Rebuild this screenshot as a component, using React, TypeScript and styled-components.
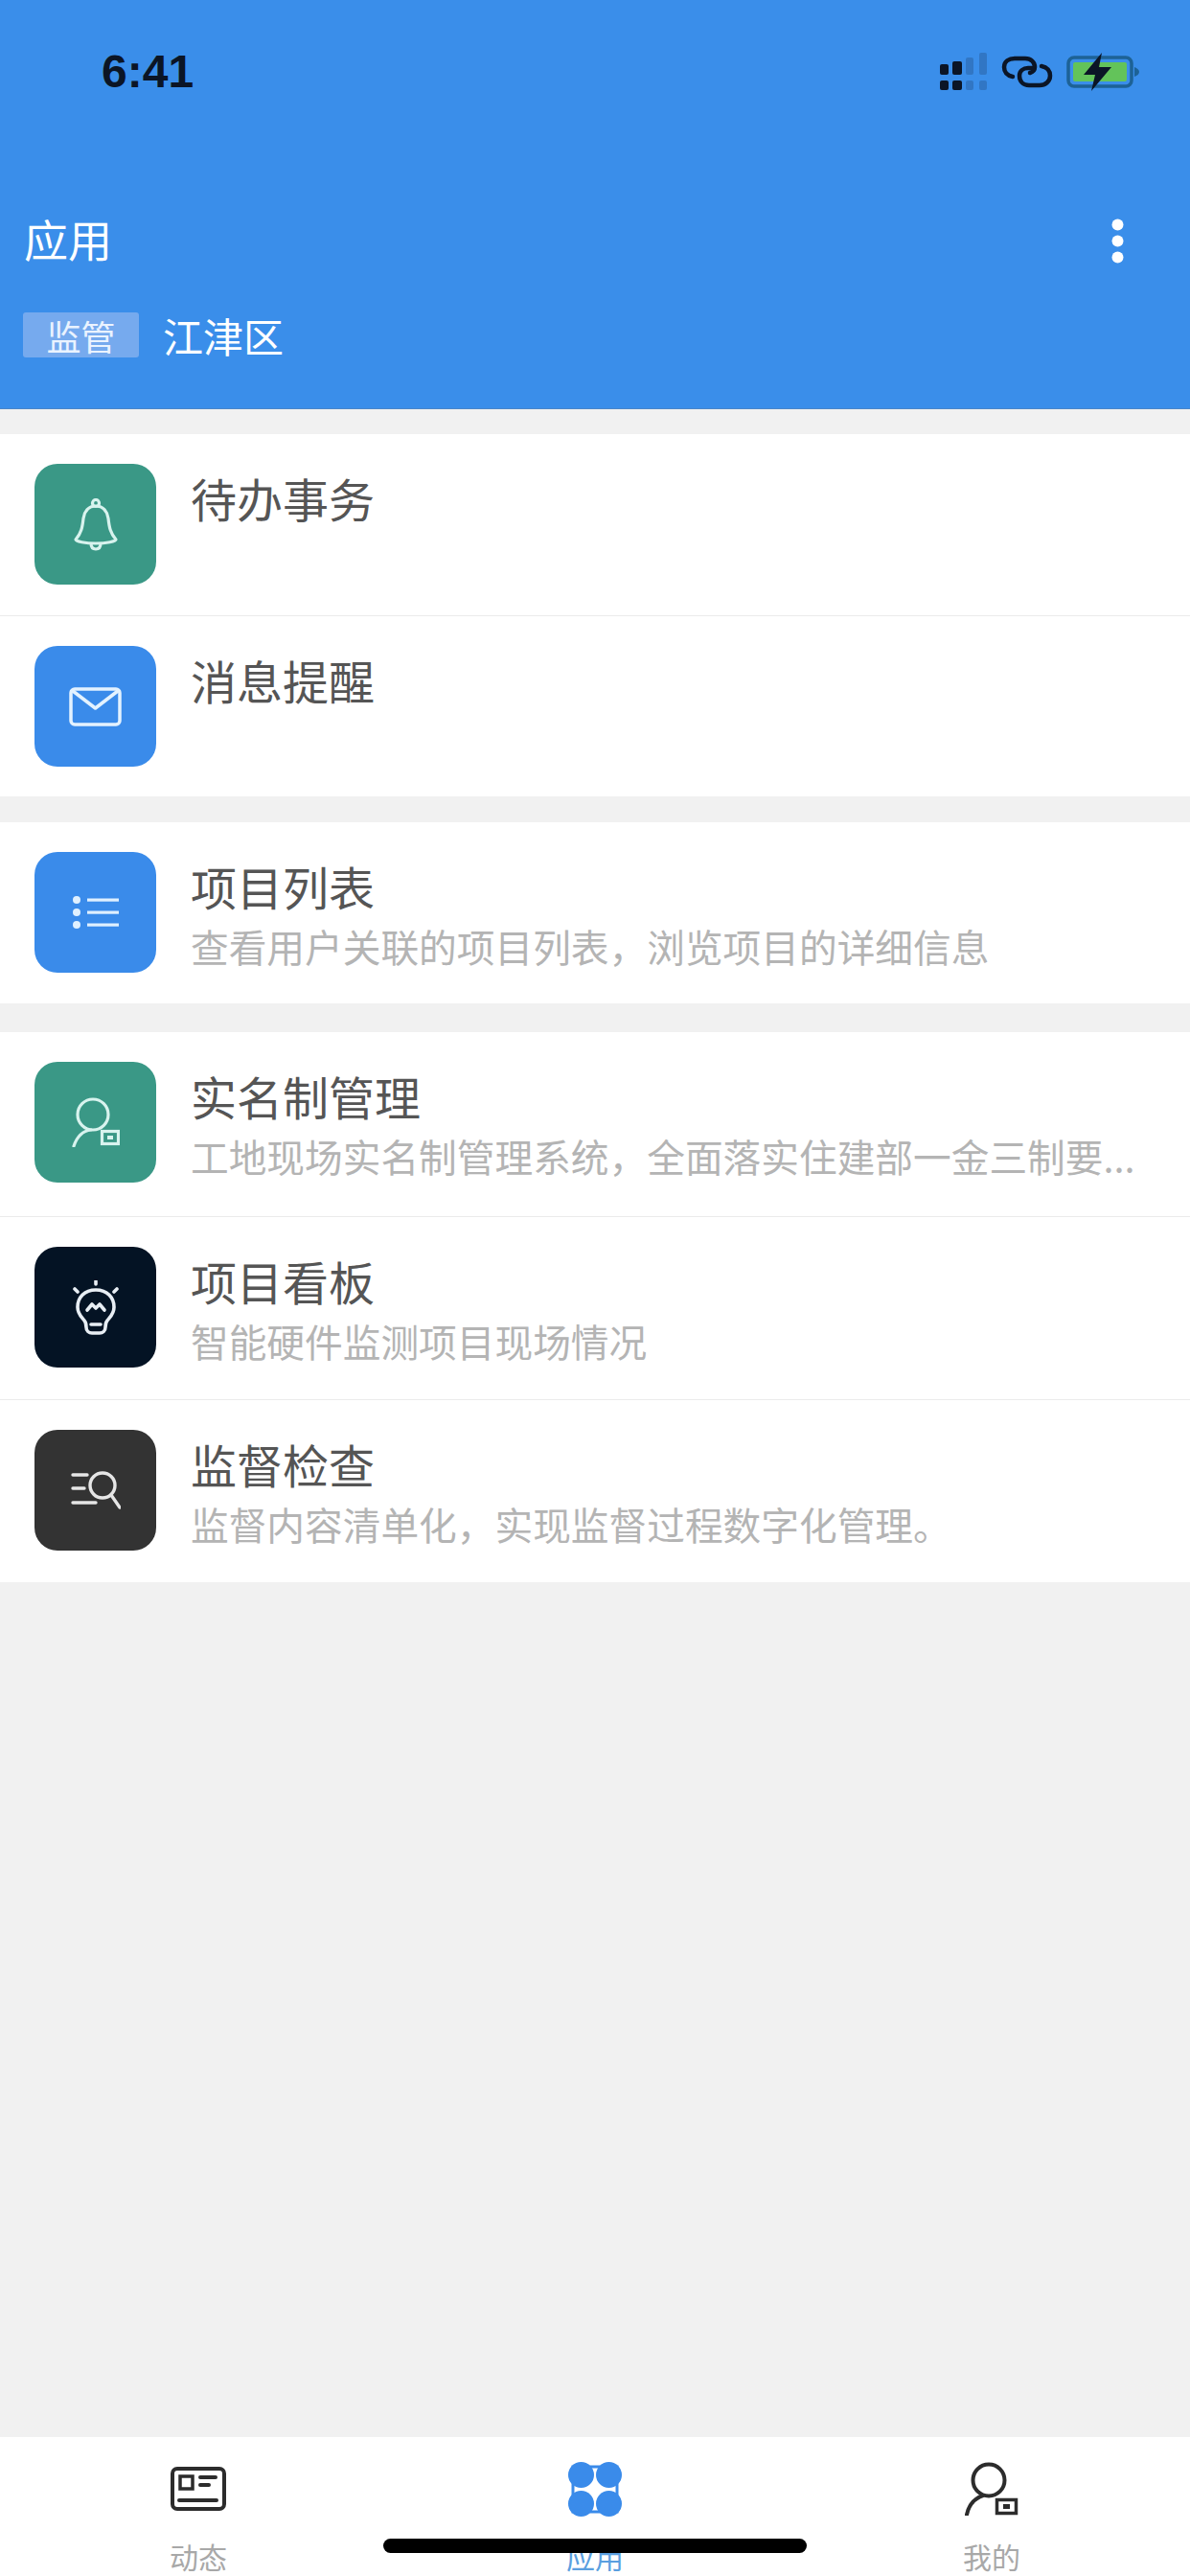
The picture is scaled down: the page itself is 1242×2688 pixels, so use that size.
import styled, { createGlobalStyle } from "styled-components";

const GlobalStyle = createGlobalStyle`
  html, body {
    margin: 0;
    padding: 0;
    background: #f1f1f1;
  }
  * {
    box-sizing: border-box;
  }
`;

const CJK = `"Noto Sans CJK SC", "Noto Sans", sans-serif`;

const Page = styled.div`
  position: relative;
  width: 1242px;
  height: 2688px;
  display: flex;
  flex-direction: column;
  overflow: hidden;
  background: #f1f1f1;
  font-family: ${CJK};
`;

const Header = styled.header`
  height: 427px;
  flex-shrink: 0;
  padding-top: 50px;
  background: #3a8eea;
  color: #fff;
  border-bottom: 1px solid #4a86c8;
`;

const StatusBar = styled.div`
  height: 50px;
  display: flex;
  align-items: center;
  justify-content: space-between;
  padding: 0 52px 0 106px;
`;

const Time = styled.span`
  font-family: "Liberation Sans", Arial, sans-serif;
  font-size: 48px;
  font-weight: 700;
  color: #0b1526;
  line-height: 49px;
  height: 50px;
`;

const StatusIcons = styled.div`
  display: flex;
  align-items: center;
  gap: 14px;
`;

const TitleRow = styled.div`
  height: 50px;
  margin-top: 126px;
  padding: 0 69px 0 25px;
  display: flex;
  align-items: center;
  justify-content: space-between;
`;

const PageTitle = styled.h1`
  margin: -6px 0 0;
  font-size: 46px;
  font-weight: 400;
  line-height: 50px;
`;

const ScopeRow = styled.div`
  height: 47px;
  margin-top: 50px;
  padding-left: 24px;
  display: flex;
  align-items: flex-start;
  gap: 25px;
`;

const ScopeTag = styled.span`
  width: 121px;
  height: 47px;
  display: flex;
  align-items: center;
  justify-content: center;
  background: #76aaee;
  border-radius: 3px;
  font-size: 36px;
  line-height: 44px;
  color: #eaf3ff;
`;

const ScopeName = styled.span`
  font-size: 42px;
  line-height: 47px;
`;

const Content = styled.main`
  flex: 1;
  padding-top: 26px;
  display: flex;
  flex-direction: column;
  gap: 27px;
`;

const Section = styled.section<{ $offset?: number }>`
  margin-top: ${(props) => props.$offset ?? 0}px;
  background: #fff;
`;

const Row = styled.div<{ $height?: number }>`
  height: ${(props) => props.$height ?? 189}px;
  padding: 31px 0 0 36px;
  display: flex;
  align-items: flex-start;
  gap: 36px;
  border-top: 1px solid #ebebeb;

  &:first-child {
    border-top: none;
  }
`;

const Tile = styled.div<{ $color: string }>`
  width: 127px;
  height: 126px;
  flex-shrink: 0;
  display: flex;
  align-items: center;
  justify-content: center;
  border-radius: 24px;
  background: ${(props) => props.$color};
`;

const RowText = styled.div`
  padding-top: 11px;
  min-width: 0;
`;

const RowTitle = styled.div`
  font-size: 48px;
  line-height: 48px;
  color: #555;
`;

const RowDesc = styled.div`
  margin-top: 19px;
  font-size: 39.7px;
  line-height: 40px;
  color: #b4b4b4;
  white-space: nowrap;
`;

const TabBar = styled.nav`
  height: 145px;
  flex-shrink: 0;
  display: grid;
  grid-template-columns: repeat(3, 1fr);
  background: #fff;
`;

const Tab = styled.div<{ $active?: boolean }>`
  padding-top: 24px;
  display: flex;
  flex-direction: column;
  align-items: center;
  font-size: 30px;
  line-height: 30px;
  color: ${(props) => (props.$active ? "#5a9fe0" : "#a8a8a8")};
`;

const TabIcon = styled.div`
  height: 60px;
  margin-bottom: 25px;
  display: flex;
  align-items: center;
  justify-content: center;
`;

const HomeBar = styled.div`
  position: absolute;
  left: 400px;
  bottom: 24px;
  width: 442px;
  height: 15px;
  border-radius: 8px;
  background: #000;
`;

function SignalIcon() {
  return (
    <svg width="50" height="40" viewBox="0 0 50 40">
      <g fill="#0b1526">
        <rect x="0" y="12" width="9" height="11" rx="2" />
        <rect x="13" y="9" width="10" height="14" rx="2" />
        <rect x="0" y="29" width="9" height="10" rx="2" />
        <rect x="13" y="29" width="10" height="10" rx="2" />
      </g>
      <g fill="#2f6fb8" opacity="0.75">
        <rect x="27" y="5" width="8" height="18" rx="2" />
        <rect x="41" y="0" width="8" height="23" rx="2" />
        <rect x="27" y="29" width="8" height="10" rx="2" />
        <rect x="41" y="29" width="8" height="10" rx="2" />
      </g>
    </svg>
  );
}

function LinkIcon() {
  return (
    <svg width="54" height="34" viewBox="0 0 54 34" fill="none" stroke="#0b1526" strokeWidth="4.5" strokeLinecap="round">
      <path d="M12 22C6 21 3 17 3 12 3 6 8 3 14 3H25c6 0 10 4 10 9 0 3-2 5-5 6" />
      <path d="M42 11c6 1 9 5 9 10 0 6-5 10-11 10H29c-6 0-10-4-10-10 0-5 4-8 9-8h4" />
    </svg>
  );
}

function BatteryIcon() {
  return (
    <svg width="77" height="40" viewBox="0 0 77 40">
      <rect x="2" y="5" width="66" height="30" rx="6" fill="none" stroke="#1d6296" strokeWidth="3.5" />
      <rect x="7" y="10" width="56" height="20" rx="2" fill="#63c35a" />
      <path d="M71 15c3 1 5 3 5 5s-2 4-5 5z" fill="#1d6296" />
      <path d="M37 0 18 23h12l-4 17 21-25H34z" fill="#0b1526" />
    </svg>
  );
}

function DotsIcon() {
  return (
    <svg width="13" height="47" viewBox="0 0 13 47" fill="#fff">
      <circle cx="6.5" cy="6.5" r="6" />
      <circle cx="6.5" cy="23.5" r="6" />
      <circle cx="6.5" cy="40.5" r="6" />
    </svg>
  );
}

function BellIcon() {
  return (
    <svg width="46" height="55" viewBox="0 0 46 55" fill="none" stroke="#d8f3ee" strokeWidth="3.2" strokeLinejoin="round">
      <circle cx="23" cy="5" r="3.5" />
      <path d="M23 8c-8 0-12 6-13 13-1 9-2 15-8 22 0 2 10 4 21 4s21-2 21-4c-6-7-7-13-8-22-1-7-5-13-13-13z" />
      <path d="M18 47c0 4 2 6 5 6s5-2 5-6" />
    </svg>
  );
}

function MailIcon() {
  return (
    <svg width="55" height="41" viewBox="0 0 55 41" fill="none" stroke="#e3f2ff" strokeWidth="3.5" strokeLinejoin="round" strokeLinecap="round">
      <rect x="2" y="2" width="51" height="37" rx="4" />
      <path d="M4 4 27.5 22 51 4" />
    </svg>
  );
}

function ListIcon() {
  return (
    <svg width="48" height="34" viewBox="0 0 48 34" fill="#dff0ff">
      <circle cx="4" cy="4" r="4" />
      <circle cx="4" cy="17" r="4" />
      <circle cx="4" cy="30" r="4" />
      <rect x="15" y="2.5" width="33" height="3.2" />
      <rect x="15" y="15.5" width="33" height="3.2" />
      <rect x="15" y="28.5" width="33" height="3.2" />
    </svg>
  );
}

function PersonIcon() {
  return (
    <svg width="50" height="52" viewBox="0 0 50 52" fill="none" stroke="#d8f3ee" strokeWidth="3.2">
      <circle cx="22" cy="18" r="16" />
      <path d="M20 34C11 35 5 42 2 51" strokeLinecap="round" />
      <rect x="31.5" y="35.5" width="17" height="13" />
      <rect x="37" y="40" width="6" height="4" fill="#d8f3ee" stroke="none" />
    </svg>
  );
}

function BulbIcon() {
  return (
    <svg width="50" height="57" viewBox="0 0 50 57" fill="none" stroke="#e8eef4" strokeWidth="3.6" strokeLinecap="round" strokeLinejoin="round">
      <path d="M25 1v3M3 9l3 3M47 9l-3 3" />
      <path d="M25 10C13 10 6 18 6 28c0 7 4 10 7 14 2 2 2 4 2 7 0 4 3 6 6 6h8c3 0 6-2 6-6 0-3 0-5 2-7 3-4 7-7 7-14 0-10-7-18-19-18z" />
      <path d="M16 31l5-6 4 4 4-4 5 6" />
      <path d="M20 46h10" />
    </svg>
  );
}

function InspectIcon() {
  return (
    <svg width="52" height="40" viewBox="0 0 52 40" fill="none" stroke="#e6e6e6" strokeWidth="3.4" strokeLinecap="round">
      <path d="M2 4h15M2 18h12M2 33h24" />
      <circle cx="33" cy="15" r="13" />
      <path d="M42 25l9 13" />
    </svg>
  );
}

function CardIcon() {
  return (
    <svg width="58" height="46" viewBox="0 0 58 46" fill="none" stroke="#2c2c2c" strokeWidth="4" strokeLinecap="round">
      <rect x="2" y="2" width="54" height="42" rx="5" />
      <rect x="10" y="10" width="13" height="13" strokeWidth="3.5" />
      <path d="M31 11h16M31 19h9M9 35h39" />
    </svg>
  );
}

function AppsIcon() {
  return (
    <svg width="56" height="57" viewBox="0 0 56 57" fill="#3a8bea">
      <rect x="5" y="5" width="46" height="47" fill="none" stroke="#3a8bea" strokeWidth="3" />
      <circle cx="13.5" cy="13.5" r="13.5" />
      <circle cx="42.5" cy="13.5" r="13.5" />
      <circle cx="13.5" cy="43.5" r="13.5" />
      <circle cx="42.5" cy="43.5" r="13.5" />
    </svg>
  );
}

function MeIcon() {
  return (
    <svg width="56" height="56" viewBox="0 0 56 56" fill="none" stroke="#2c2c2c" strokeWidth="4">
      <circle cx="25" cy="19" r="16.5" />
      <path d="M19 35C10 38 4 45 2 55" strokeLinecap="round" />
      <rect x="33.5" y="39.5" width="20" height="14" strokeWidth="3.5" />
      <rect x="40" y="44" width="7" height="5" fill="#2c2c2c" stroke="none" />
    </svg>
  );
}

export default function App() {
  return (
    <Page>
      <GlobalStyle />
      <Header>
        <StatusBar>
          <Time>6:41</Time>
          <StatusIcons>
            <SignalIcon />
            <LinkIcon />
            <BatteryIcon />
          </StatusIcons>
        </StatusBar>
        <TitleRow>
          <PageTitle>应用</PageTitle>
          <DotsIcon />
        </TitleRow>
        <ScopeRow>
          <ScopeTag>监管</ScopeTag>
          <ScopeName>江津区</ScopeName>
        </ScopeRow>
      </Header>
      <Content>
        <Section>
          <Row>
            <Tile $color="#3a9886"><BellIcon /></Tile>
            <RowText>
              <RowTitle>待办事务</RowTitle>
            </RowText>
          </Row>
          <Row>
            <Tile $color="#3a8bea"><MailIcon /></Tile>
            <RowText>
              <RowTitle>消息提醒</RowTitle>
            </RowText>
          </Row>
        </Section>
        <Section>
          <Row>
            <Tile $color="#3a8bea"><ListIcon /></Tile>
            <RowText>
              <RowTitle>项目列表</RowTitle>
              <RowDesc>查看用户关联的项目列表，浏览项目的详细信息</RowDesc>
            </RowText>
          </Row>
        </Section>
        <Section $offset={3}>
          <Row $height={192}>
            <Tile $color="#3a9886"><PersonIcon /></Tile>
            <RowText>
              <RowTitle>实名制管理</RowTitle>
              <RowDesc>工地现场实名制管理系统，全面落实住建部一金三制要...</RowDesc>
            </RowText>
          </Row>
          <Row $height={191}>
            <Tile $color="#041324"><BulbIcon /></Tile>
            <RowText>
              <RowTitle>项目看板</RowTitle>
              <RowDesc>智能硬件监测项目现场情况</RowDesc>
            </RowText>
          </Row>
          <Row $height={191}>
            <Tile $color="#333333"><InspectIcon /></Tile>
            <RowText>
              <RowTitle>监督检查</RowTitle>
              <RowDesc>监督内容清单化，实现监督过程数字化管理。</RowDesc>
            </RowText>
          </Row>
        </Section>
      </Content>
      <TabBar>
        <Tab>
          <TabIcon><CardIcon /></TabIcon>
          动态
        </Tab>
        <Tab $active>
          <TabIcon><AppsIcon /></TabIcon>
          应用
        </Tab>
        <Tab>
          <TabIcon><MeIcon /></TabIcon>
          我的
        </Tab>
      </TabBar>
      <HomeBar />
    </Page>
  );
}
